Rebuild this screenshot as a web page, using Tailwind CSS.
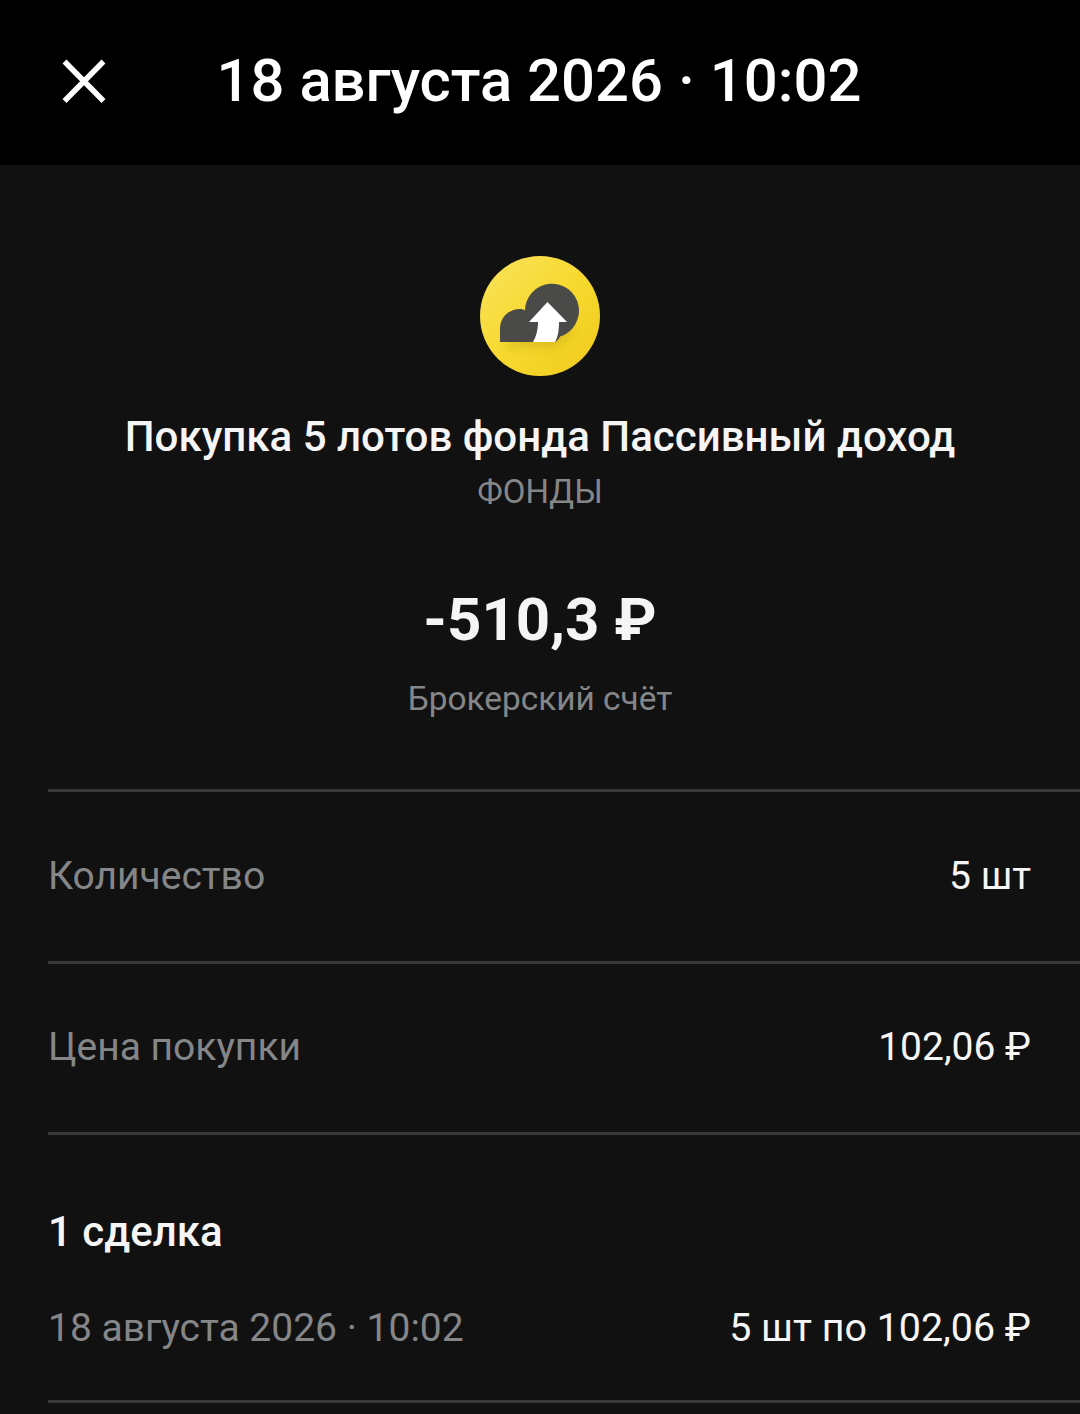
<!DOCTYPE html>
<html lang="ru">
<head>
    <meta charset="UTF-8">
    <meta name="viewport" content="width=device-width, initial-scale=1.0">
    <title>Покупка</title>
    <script src="https://cdn.jsdelivr.net/npm/@tailwindcss/browser@4"></script>
</head>
<body class="h-[1414px] w-[1080px] overflow-hidden bg-[#111112] font-['Roboto',sans-serif] text-white">
    <!-- шапка -->
    <header class="flex h-[165px] items-center justify-center bg-black pb-[4px] pr-[2px] relative">
        <svg class="absolute left-[60px] top-[58px] h-[48px] w-[48px]" viewBox="0 0 48 48" fill="none" stroke="#fff" stroke-width="5.5">
            <path d="M4.5 3.5 L43.5 43 M43.5 3.5 L4.5 43"/>
        </svg>
        <h1 class="text-[59.8px] leading-[70px] font-medium">18 августа 2026 · 10:02</h1>
    </header>

    <!-- операция -->
    <section class="flex flex-col items-center pt-[91px]">
        <svg class="h-[120px] w-[120px]" viewBox="0 0 120 120">
            <defs>
                <linearGradient id="coin" x1="0" y1="0" x2="1" y2="1">
                    <stop offset="0" stop-color="#f9e25e"/>
                    <stop offset="0.5" stop-color="#f7d92f"/>
                    <stop offset="1" stop-color="#efca1c"/>
                </linearGradient>
                <filter id="soft" x="-30%" y="-30%" width="160%" height="160%">
                    <feGaussianBlur stdDeviation="4"/>
                </filter>
            </defs>
            <circle cx="60" cy="60" r="60" fill="url(#coin)"/>
            <path d="M22 92 H78 L96 72 L60 60 Z" fill="#b89a10" opacity="0.35" filter="url(#soft)"/>
            <path d="M20 86 V73 C20 61 29 53 40 53 C42 53 44 53.5 45 54.5 A27 27 0 1 1 80 80.5 C79 83 77 85 75 86 Z" fill="#4a4a48"/>
            <path d="M53 86 C56 81 58 74 58 66 H49 L67.5 46 L87 66 H79 C79 74 78 81 75 86 Z" fill="#fff"/>
        </svg>
        <h2 class="mt-[36px] text-[42.05px] leading-[50px] font-medium text-[#f5f5f5]">Покупка 5 лотов фонда Пассивный доход</h2>
        <p class="mt-[10px] text-[33px] leading-[40px] text-[#858688]">ФОНДЫ</p>
        <p class="mt-[73px] text-[60px] leading-[70px] font-bold text-[#f5f5f5]">-510,3 ₽</p>
        <p class="mt-[24px] text-[33.4px] leading-[40px] text-[#858688]">Брокерский счёт</p>
    </section>

    <!-- детали -->
    <section class="ml-[48px] mt-[70px]">
        <div class="flex h-[172px] items-center justify-between border-t-[3px] border-[#38383a] pr-[49px] text-[39px]">
            <span class="text-[#858688]">Количество</span>
            <span class="text-[#f5f5f5]">5 шт</span>
        </div>
        <div class="flex h-[171px] items-center justify-between border-t-[3px] border-[#38383a] pr-[49px] text-[39px] pb-[1px]">
            <span class="text-[#858688]">Цена покупки</span>
            <span class="text-[#f5f5f5]">102,06 ₽</span>
        </div>
        <div class="h-[268px] border-t-[3px] border-[#38383a] pr-[49px]">
            <h3 class="pt-[72px] text-[42px] leading-[50px] font-medium text-[#f5f5f5]">1 сделка</h3>
            <div class="mt-[46px] flex items-center justify-between text-[39px] leading-[50px]">
                <span class="text-[#858688]">18 августа 2026 · 10:02</span>
                <span class="text-[39.4px] text-[#f5f5f5]">5 шт по 102,06 ₽</span>
            </div>
        </div>
        <div class="border-t-[3px] border-[#38383a]"></div>
    </section>
</body>
</html>
